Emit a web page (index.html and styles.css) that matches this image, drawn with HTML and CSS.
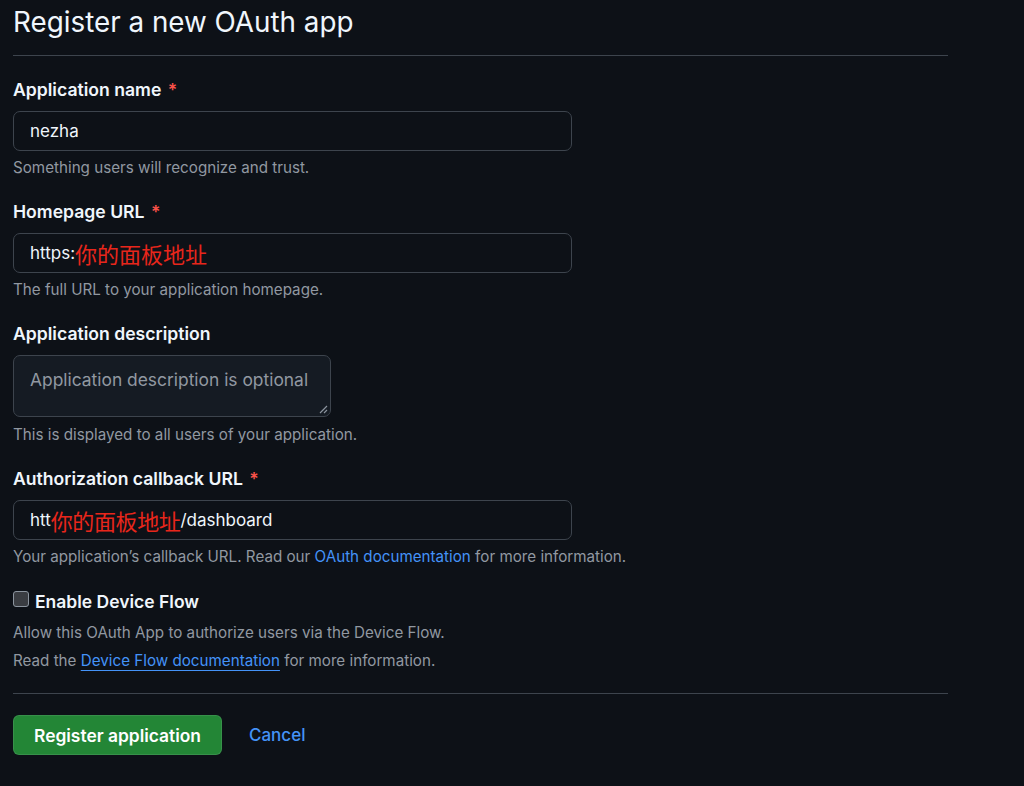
FILE: index.html
```html
<!DOCTYPE html>
<html lang="en">
<head>
<meta charset="utf-8">
<title>Register a new OAuth app</title>
<link rel="stylesheet" href="styles.css">
</head>
<body>
<main class="page">
  <header class="page-head">
    <h1 class="title">Register a new OAuth app</h1>
  </header>

  <form class="form">
    <div class="group">
      <label class="label">Application name <span class="req">*</span></label>
      <div class="input"><span class="val">nezha</span></div>
      <p class="note">Something users will recognize and trust.</p>
    </div>

    <div class="group">
      <label class="label">Homepage URL <span class="req">*</span></label>
      <div class="input">
        <span class="val">https:</span><span class="mark mark-home">你的面板地址</span>
      </div>
      <p class="note">The full URL to your application homepage.</p>
    </div>

    <div class="group">
      <label class="label">Application description</label>
      <div class="textarea">
        <span class="placeholder">Application description is optional</span>
        <svg class="grip" width="10" height="10" viewBox="0 0 10 10"><path d="M9 2 L2 9 M9 6 L6 9" stroke="#8b949e" stroke-width="1.2" fill="none"/></svg>
      </div>
      <p class="note">This is displayed to all users of your application.</p>
    </div>

    <div class="group">
      <label class="label">Authorization callback URL <span class="req">*</span></label>
      <div class="input">
        <span class="val">htt</span><span class="mark mark-cb">你的面板地址</span><span class="val">/dashboard</span>
      </div>
      <p class="note">Your application’s callback URL. Read our <a class="link">OAuth documentation</a> for more information.</p>
    </div>

    <div class="group">
      <div class="check-row">
        <span class="checkbox"></span>
        <span class="check-label">Enable Device Flow</span>
      </div>
      <p class="note note-first">Allow this OAuth App to authorize users via the Device Flow.</p>
      <p class="note note-second">Read the <a class="link link-u">Device Flow documentation</a> for more information.</p>
    </div>

    <div class="actions">
      <button type="button" class="btn-primary">Register application</button>
      <a class="cancel">Cancel</a>
    </div>
  </form>
</main>
</body>
</html>
```

FILE: styles.css
```css
html, body {
  margin: 0;
  padding: 0;
  background: #0d1117;
}

body {
  font-family: Inter, "Liberation Sans", Arial, sans-serif;
  color: #f0f6fc;
}

.page {
  width: 935px;
  padding: 0 13px;
}

.page-head {
  padding-top: 4px;
  padding-bottom: 15px;
  border-bottom: 1px solid #3d444d;
}

.title {
  margin: 0;
  font-size: 27.8px;
  line-height: 36px;
  font-weight: 400;
  color: #f0f6fc;
}

.form {
  margin: 0;
}

.group {
  margin-top: 22px;
}

.label {
  display: block;
  font-size: 17.6px;
  line-height: 24px;
  font-weight: 600;
  color: #f0f6fc;
  margin-bottom: 9px;
}

.req {
  color: #f85149;
  margin-left: 2px;
}

.input {
  box-sizing: border-box;
  width: 559px;
  height: 40px;
  border: 1px solid #3d444d;
  border-radius: 7px;
  background: #0d1117;
  padding: 0 16px;
  display: flex;
  align-items: center;
  font-size: 17px;
  color: #f0f6fc;
}

.val {
  white-space: pre;
}

.mark {
  font-family: "Noto Sans CJK SC", sans-serif;
  font-size: 22px;
  line-height: 28px;
  color: #e8261b;
}

.mark-cb {
  letter-spacing: -0.4px;
}

.textarea {
  position: relative;
  box-sizing: border-box;
  width: 318px;
  height: 62px;
  border: 1px solid #3d444d;
  border-radius: 7px;
  background: #151b23;
  padding: 13px 16px 0;
  font-size: 17.4px;
  line-height: 22px;
}

.placeholder {
  color: #9198a1;
}

.grip {
  position: absolute;
  right: 2px;
  bottom: 2px;
}

.note {
  margin: 7px 0 0;
  font-size: 15.2px;
  line-height: 20px;
  color: #9198a1;
}

.textarea + .note {
  margin-top: 8px;
}

.link {
  color: #4493f8;
  text-decoration: none;
}

.link-u {
  text-decoration: underline;
  text-underline-offset: 4px;
  text-decoration-thickness: 1px;
}

.check-row {
  display: flex;
  align-items: center;
  height: 24px;
}

.checkbox {
  box-sizing: border-box;
  width: 16px;
  height: 16px;
  border: 1px solid #8b949e;
  border-radius: 3px;
  background: #3a3d42;
  margin-right: 6px;
  margin-top: -4px;
}

.check-label {
  font-size: 17.5px;
  font-weight: 600;
  color: #f0f6fc;
}

.note-first {
  margin-top: 10px;
}

.note-second {
  margin-top: 8px;
}

.actions {
  margin-top: 22px;
  border-top: 1px solid #3d444d;
  padding-top: 21px;
  display: flex;
  align-items: center;
}

.btn-primary {
  box-sizing: border-box;
  width: 209px;
  height: 40px;
  border: 1px solid rgba(240, 246, 252, 0.1);
  border-radius: 6px;
  background: #238636;
  color: #ffffff;
  font-family: Inter, "Liberation Sans", Arial, sans-serif;
  font-size: 17.4px;
  font-weight: 600;
  padding: 0;
}

.cancel {
  margin-left: 27px;
  font-size: 17px;
  font-weight: 500;
  color: #4493f8;
}
```
